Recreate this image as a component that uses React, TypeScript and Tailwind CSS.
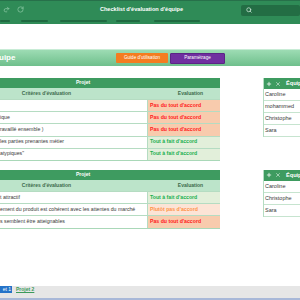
import React from "react";
import { Redo2, RotateCw, Search, Plus, X } from "lucide-react";

type Mark = "bad" | "good" | "meh";

const marks: Record<Mark, { label: string; cls: string }> = {
  bad: { label: "Pas du tout d'accord", cls: "bg-[#f8cbad] text-[#ff1a1a]" },
  good: { label: "Tout à fait d'accord", cls: "bg-[#e2efda] text-[#19b04f]" },
  meh: { label: "Plutôt pas d'accord", cls: "bg-[#fce4d6] text-[#ff9347]" },
};

function CriteriaTable({ rows }: { rows: { text: string; mark: Mark }[] }) {
  return (
    <div className="w-[220px] shrink-0 border-b border-[#a9d8b8]">
      <div className="h-[10px] bg-[#3e9b60] flex items-center justify-center pr-[54px] text-white font-bold text-[5px]">
        Projet
      </div>
      <div className="h-[11px] bg-[#bce4ca] flex text-[5px] font-bold text-[#3d6b4c]">
        <div className="w-[147px] flex items-center justify-center pr-[54px]">Critères d'évaluation</div>
        <div className="flex-1 flex items-center justify-center pl-[14px]">Evaluation</div>
      </div>
      {rows.map((r, i) => (
        <div key={i} className="h-[12.2px] flex border-t border-[#b5dcc2] text-[5.2px]">
          <div className="w-[147px] bg-white flex items-center whitespace-nowrap overflow-hidden text-[#3a3a3a]">
            {r.text}
          </div>
          <div className={`flex-1 flex items-center pl-[2px] font-bold border-l border-[#b5dcc2] ${marks[r.mark].cls}`}>
            {marks[r.mark].label}
          </div>
        </div>
      ))}
    </div>
  );
}

function TeamTable({ names }: { names: string[] }) {
  return (
    <div className="w-[70px] shrink-0 border-l border-[#b5dcc2]">
      <div className="h-[11px] bg-[#3e9b60] flex items-center gap-[3px] pl-[2px] text-white font-bold text-[5.6px]">
        <Plus size={6} strokeWidth={3} />
        <X size={6} strokeWidth={2} />
        <span className="ml-[2px]">Équipe</span>
      </div>
      {names.map((n) => (
        <div key={n} className="h-[12px] flex items-center pl-[1px] bg-white border-b border-[#c6e4cf] text-[5.5px] text-[#3a3a3a]">
          {n}
        </div>
      ))}
    </div>
  );
}

export default function App() {
  const tabLines: [number, number][] = [
    [0, 10], [11, 27], [12, 47], [9, 24], [14, 46],
  ];
  return (
    <div className="w-[300px] h-[300px] overflow-hidden bg-white flex flex-col font-['Liberation_Sans',Arial,sans-serif]">
      {/* title bar */}
      <div className="h-[24px] shrink-0 bg-[#2f8b57] border-t border-[#27704a] flex flex-col">
        <div className="h-[17px] flex items-center">
          <div className="flex items-center gap-[7px] pl-[3px] text-[#8cc9a5]">
            <Redo2 size={7} strokeWidth={2.5} />
            <RotateCw size={7} strokeWidth={2.5} />
          </div>
          <div className="flex-1 text-center text-white font-bold text-[5.6px] pl-[18px]">
            Checklist d'évaluation d'équipe
          </div>
          <div className="w-[59px] h-[11px] mt-[1px] rounded-[2px] bg-[#236d44] flex items-center pl-[5px] text-[#cfe8d9]">
            <Search size={6} strokeWidth={3} />
          </div>
        </div>
        <div className="flex items-center h-[6px]">
          {tabLines.map(([ml, w], i) => (
            <div key={i} className="h-[2px] bg-[#1f6a41] rounded-full" style={{ marginLeft: ml, width: w }} />
          ))}
        </div>
      </div>

      <div className="h-[25px] shrink-0" />

      {/* banner */}
      <div className="h-[17px] shrink-0 bg-gradient-to-b from-[#9ddcb4] to-[#6ebf8c] border-t border-[#c8ecd6] flex items-center">
        <div className="w-[117px] text-white font-bold text-[8px] -ml-[1px]">uipe</div>
        <div className="h-[10px] w-[52px] bg-[#f47c20] rounded-[1px] flex items-center justify-center text-white text-[4.6px]">
          Guide d'utilisation
        </div>
        <div className="ml-[2px] h-[11px] w-[55px] bg-[#7030a0] border border-[#5b2585] rounded-[1px] flex items-center justify-center text-white text-[4.6px]">
          Paramétrage
        </div>
      </div>

      <div className="h-[12px] shrink-0" />

      <div className="flex gap-[43px]">
        <CriteriaTable
          rows={[
            { text: "", mark: "bad" },
            { text: "ique", mark: "bad" },
            { text: "ravaillé ensemble )", mark: "bad" },
            { text: " les parties prenantes métier", mark: "good" },
            { text: "atypiques\"", mark: "good" },
          ]}
        />
        <div className="self-start">
          <TeamTable names={["Caroline", "mohammed", "Christophe", "Sara"]} />
        </div>
      </div>

      <div className="h-[9px] shrink-0" />

      <div className="flex gap-[43px]">
        <CriteriaTable
          rows={[
            { text: "t attractif", mark: "good" },
            { text: "ement du produit est cohérent avec les attentes du marché", mark: "meh" },
            { text: "s semblent être atteignables", mark: "bad" },
          ]}
        />
        <div className="self-start">
          <TeamTable names={["Caroline", "Christophe", "Sara"]} />
        </div>
      </div>

      <div className="flex-1" />

      {/* sheet tabs */}
      <div className="h-[12px] shrink-0 bg-[#e6e6e6] flex items-start">
        <div className="h-[7px] w-[12px] bg-[#2573c8] text-white text-[5px] flex items-center justify-end pr-[1px]">
          et 1
        </div>
        <div className="ml-[4px] h-[7px] flex items-center text-[#3c9a5c] font-bold text-[5px] underline">
          Projet 2
        </div>
      </div>
      <div className="h-[2px] shrink-0 bg-[#a8b8d8]" />
    </div>
  );
}
